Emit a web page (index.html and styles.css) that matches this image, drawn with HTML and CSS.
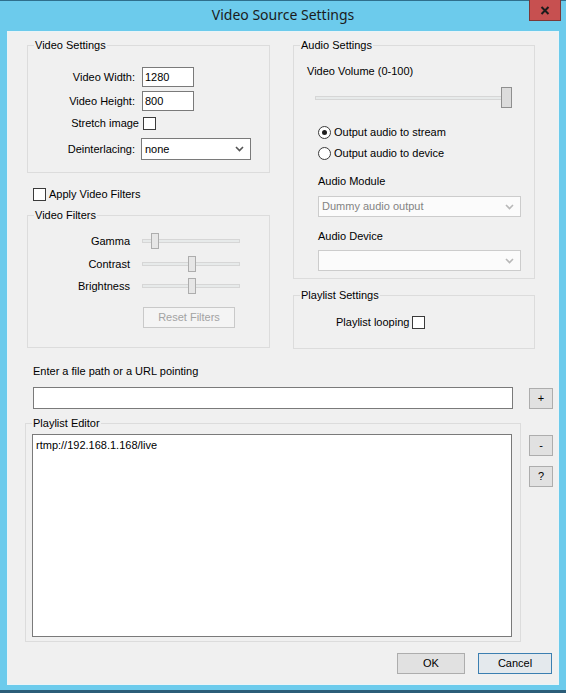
FILE: index.html
```html
<!DOCTYPE html>
<html>
<head>
<meta charset="utf-8">
<link rel="stylesheet" href="styles.css">
</head>
<body>
<div class="window">
  <div class="titlebar">
    <div></div>
    <div class="title">Video Source Settings</div>
    <div class="close"><svg width="10" height="9" viewBox="0 0 10 9"><path d="M1.5 1 L8.5 8 M8.5 1 L1.5 8" stroke="#1c1c1c" stroke-width="2" fill="none"/></svg></div>
  </div>
  <div class="client">
    <div class="top">
      <div class="col">
        <div class="group vs">
          <div class="gtitle">Video Settings</div>
          <div class="frow r1"><span class="flabel">Video Width:</span><div class="textbox w52">1280</div></div>
          <div class="frow r2"><span class="flabel">Video Height:</span><div class="textbox w52">800</div></div>
          <div class="frow r3"><span class="flabel wide">Stretch image</span><span class="check"></span></div>
          <div class="frow r4"><span class="flabel">Deinterlacing:</span><div class="combo deint"><span>none</span><svg width="9" height="6" viewBox="0 0 9 6"><path d="M1 1 L4.5 4.5 L8 1" stroke="#555" stroke-width="1.6" fill="none"/></svg></div></div>
        </div>
        <div class="apply"><span class="check"></span><span class="apply-text">Apply Video Filters</span></div>
        <div class="group vf">
          <div class="gtitle">Video Filters</div>
          <div class="srow s1"><span class="slabel">Gamma</span><div class="slider small"><div class="track"></div><div class="thumb" style="left:9px"></div></div></div>
          <div class="srow s2"><span class="slabel">Contrast</span><div class="slider small"><div class="track"></div><div class="thumb" style="left:46px"></div></div></div>
          <div class="srow s3"><span class="slabel">Brightness</span><div class="slider small"><div class="track"></div><div class="thumb" style="left:46px"></div></div></div>
          <div class="btn reset">Reset Filters</div>
        </div>
      </div>
      <div class="col">
        <div class="group au">
          <div class="gtitle">Audio Settings</div>
          <div class="vol-label">Video Volume (0-100)</div>
          <div class="slider big"><div class="track"></div><div class="thumb" style="left:186px"></div></div>
          <div class="radio-row rr1"><span class="radio on"></span><span>Output audio to stream</span></div>
          <div class="radio-row rr2"><span class="radio"></span><span>Output audio to device</span></div>
          <div class="alabel al1">Audio Module</div>
          <div class="combo disabled am"><span>Dummy audio output</span><svg width="9" height="6" viewBox="0 0 9 6"><path d="M1 1 L4.5 4.5 L8 1" stroke="#b8b8b8" stroke-width="1.6" fill="none"/></svg></div>
          <div class="alabel al2">Audio Device</div>
          <div class="combo disabled ad"><span></span><svg width="9" height="6" viewBox="0 0 9 6"><path d="M1 1 L4.5 4.5 L8 1" stroke="#b8b8b8" stroke-width="1.6" fill="none"/></svg></div>
        </div>
        <div class="group ps">
          <div class="gtitle">Playlist Settings</div>
          <div class="loop-row"><span>Playlist looping</span><span class="check"></span></div>
        </div>
      </div>
    </div>
    <div class="file-label">Enter a file path or a URL pointing</div>
    <div class="file-row"><div class="textbox file-input"></div><div class="btn small plus">+</div></div>
    <div class="bottom">
      <div class="group pe">
        <div class="gtitle">Playlist Editor</div>
        <div class="listbox">rtmp://192.168.1.168/live</div>
      </div>
      <div class="side">
        <div class="btn small minus">-</div>
        <div class="btn small help">?</div>
      </div>
    </div>
    <div class="footer">
      <div class="btn ok">OK</div>
      <div class="btn cancel">Cancel</div>
    </div>
  </div>
</div>
</body>
</html>
```

FILE: styles.css
```css
html, body {
  margin: 0;
  padding: 0;
}
body {
  font-family: "Liberation Sans", Arial, sans-serif;
  font-size: 11px;
  color: #000;
  background: #6ccbec;
}
.window {
  width: 566px;
  height: 693px;
  box-sizing: border-box;
  background: #6ccbec;
  border-bottom: 3px solid #2b5d78;
  display: flex;
  flex-direction: column;
}
.titlebar {
  height: 31px;
  flex: none;
  display: grid;
  grid-template-columns: 1fr auto 1fr;
  box-shadow: inset 0 1px 0 #2f6f8c;
}
.title {
  font-family: "Noto Sans", "Open Sans", sans-serif;
  font-size: 14px;
  color: #1b1b1b;
  line-height: 30px;
  padding-top: 0;
  letter-spacing: 0;
}
.close {
  justify-self: end;
  align-self: start;
  width: 32px;
  height: 21px;
  box-sizing: border-box;
  margin-right: 5px;
  background: #c75050;
  border: 1px solid #7a3838;
  border-top: none;
  display: flex;
  align-items: center;
  justify-content: center;
}
.client {
  margin: 0 7px;
  height: 654px;
  flex: none;
  box-sizing: border-box;
  border: 1px solid #e9f4f8;
  background: #f0f0f0;
  display: flex;
  flex-direction: column;
}
.top {
  display: flex;
  align-items: flex-start;
  gap: 23px;
  margin: 13px 0 0 19px;
}
.col {
  display: flex;
  flex-direction: column;
  align-items: flex-start;
}
.group {
  border: 1px solid #dcdcdc;
  box-sizing: border-box;
  display: flex;
  flex-direction: column;
  align-items: flex-start;
}
.gtitle {
  margin: -7px 0 0 6px;
  padding: 0 1px;
  background: #f0f0f0;
  line-height: 13px;
  white-space: nowrap;
}
/* Video settings */
.vs {
  width: 243px;
  height: 128px;
}
.frow {
  display: flex;
  align-items: center;
  line-height: 13px;
}
.flabel {
  width: 107px;
  text-align: right;
  margin-right: 7px;
  white-space: nowrap;
}
.flabel.wide {
  width: 111px;
  margin-right: 4px;
}
.r1 { margin-top: 15px; }
.r2 { margin-top: 4px; }
.r3 { margin-top: 6px; }
.r4 { margin-top: 8px; }
.r4 .flabel { margin-right: 6px; }
.textbox {
  box-sizing: border-box;
  height: 20px;
  border: 1px solid #7a7a7a;
  background: #fff;
  padding: 0 2px;
  line-height: 18px;
}
.w52 { width: 52px; }
.check {
  display: inline-block;
  width: 13px;
  height: 13px;
  box-sizing: border-box;
  border: 1px solid #3a3a3a;
  background: #fff;
  flex: none;
}
.combo {
  box-sizing: border-box;
  height: 22px;
  border: 1px solid #7a7a7a;
  background: #fff;
  display: flex;
  align-items: center;
  justify-content: space-between;
  padding: 0 6px 0 3px;
  line-height: 13px;
}
.deint { width: 110px; }
.combo.disabled {
  border-color: #cccccc;
  background: #fbfbfb;
  color: #838383;
  height: 21px;
  width: 203px;
  padding-left: 3px;
}
/* apply */
.apply {
  display: flex;
  align-items: center;
  margin: 15px 0 0 6px;
  height: 13px;
  line-height: 13px;
}
.apply-text { margin-left: 3px; }
/* video filters */
.vf {
  width: 243px;
  height: 133px;
  margin-top: 14px;
}
.srow {
  display: flex;
  align-items: center;
  height: 16px;
  line-height: 13px;
}
.slabel {
  width: 102px;
  margin-right: 12px;
  text-align: right;
}
.s1 { margin-top: 11px; }
.s2 { margin-top: 7px; }
.s3 { margin-top: 6px; }
.slider {
  position: relative;
  flex: none;
}
.slider.small {
  width: 98px;
  height: 16px;
}
.slider .track {
  box-sizing: border-box;
  height: 4px;
  border: 1px solid #d6d6d6;
  background: #e7eaea;
}
.slider.small .track {
  margin-top: 6px;
  width: 98px;
}
.slider .thumb {
  position: absolute;
  top: 0;
  box-sizing: border-box;
  border: 1px solid #adadad;
  background: #e6e6e6;
}
.slider.small .thumb {
  width: 8px;
  height: 16px;
}
.btn {
  box-sizing: border-box;
  border: 1px solid #adadad;
  background: #e1e1e1;
  display: flex;
  align-items: center;
  justify-content: center;
  line-height: 13px;
}
.reset {
  margin: 13px 0 0 115px;
  width: 92px;
  height: 21px;
  color: #a3a3a3;
  border-color: #c9c9c9;
  background: #f4f4f4;
}
/* audio */
.au {
  width: 242px;
  height: 234px;
}
.vol-label {
  margin: 13px 0 0 13px;
  line-height: 13px;
}
.slider.big {
  margin: 9px 0 0 21px;
  width: 197px;
  height: 21px;
}
.slider.big .track {
  margin-top: 9px;
  width: 188px;
}
.slider.big .thumb {
  width: 11px;
  height: 21px;
  background: #dcdcdc;
  border-color: #8f8f8f;
}
.radio-row {
  display: flex;
  align-items: center;
  height: 13px;
  line-height: 13px;
  margin-left: 24px;
}
.rr1 { margin-top: 18px; }
.rr2 { margin-top: 8px; }
.radio {
  width: 13px;
  height: 13px;
  box-sizing: border-box;
  border: 1px solid #3a3a3a;
  border-radius: 50%;
  background: #fff;
  margin-right: 3px;
  display: flex;
  align-items: center;
  justify-content: center;
}
.radio.on::after {
  content: "";
  width: 5px;
  height: 5px;
  border-radius: 50%;
  background: #1e1e1e;
}
.alabel {
  margin-left: 24px;
  line-height: 13px;
}
.al1 { margin-top: 15px; }
.am { margin: 8px 0 0 24px; }
.al2 { margin-top: 13px; }
.ad { margin: 7px 0 0 24px; }
/* playlist settings */
.ps {
  width: 242px;
  height: 54px;
  margin-top: 16px;
}
.loop-row {
  display: flex;
  align-items: center;
  height: 13px;
  line-height: 13px;
  margin: 14px 0 0 42px;
}
.loop-row .check { margin-left: 3px; }
/* file row */
.file-label {
  margin: 16px 0 0 25px;
  line-height: 13px;
}
.file-row {
  display: flex;
  align-items: flex-start;
  margin: 9px 0 0 25px;
}
.file-input {
  width: 480px;
  height: 22px;
}
.btn.small {
  width: 24px;
  height: 21px;
}
.plus {
  margin: 1px 0 0 16px;
}
/* bottom */
.bottom {
  display: flex;
  align-items: flex-start;
  margin: 14px 0 0 17px;
}
.pe {
  width: 496px;
  height: 219px;
}
.listbox {
  box-sizing: border-box;
  width: 480px;
  height: 203px;
  margin: 4px 0 0 6px;
  border: 1px solid #7a7a7a;
  background: #fff;
  padding: 4px 3px;
  line-height: 13px;
}
.side {
  display: flex;
  flex-direction: column;
  margin-left: 8px;
}
.minus { margin-top: 12px; }
.help { margin-top: 10px; }
/* footer */
.footer {
  display: flex;
  justify-content: flex-end;
  gap: 13px;
  margin-top: 11px;
  padding-right: 6px;
}
.ok {
  width: 68px;
  height: 21px;
}
.cancel {
  width: 74px;
  height: 21px;
  border-color: #3c7fb1;
  background: #e4e9ed;
}
```
